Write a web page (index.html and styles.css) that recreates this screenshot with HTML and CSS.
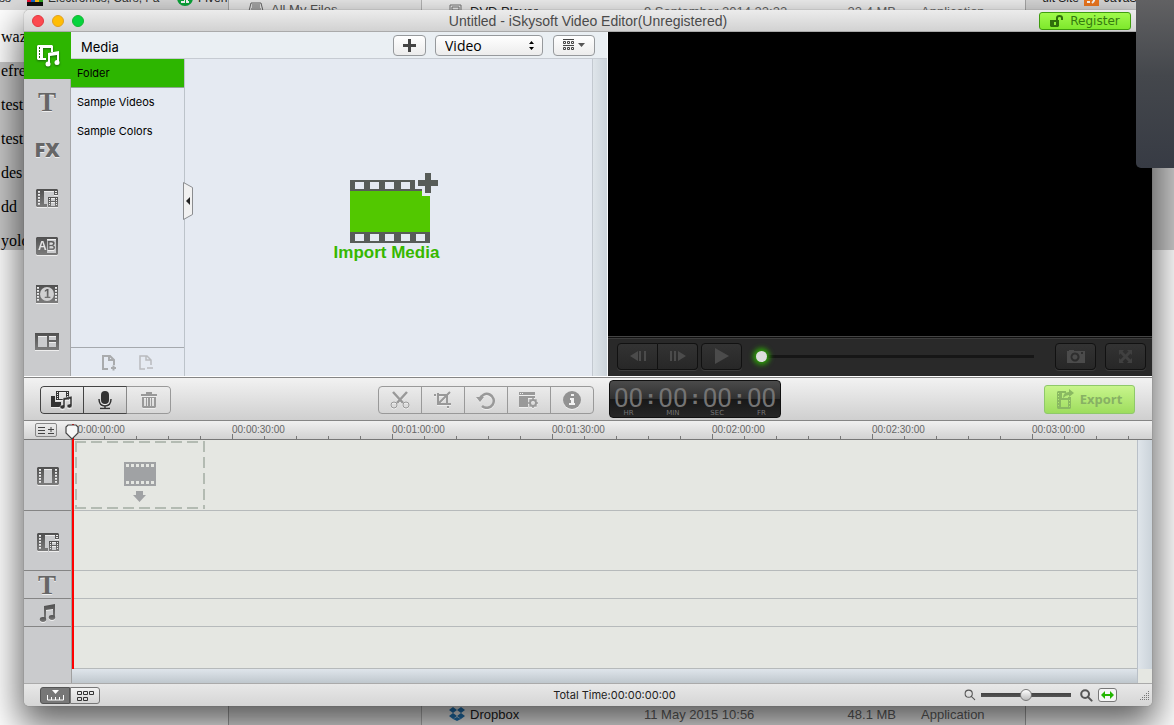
FILE: index.html
```html
<!DOCTYPE html>
<html lang="en">
<head>
<meta charset="utf-8">
<title>Untitled - iSkysoft Video Editor(Unregistered)</title>
<link rel="stylesheet" href="styles.css">
</head>
<body>
<svg class="sprite" aria-hidden="true">
  <defs>
    <linearGradient id="steel" x1="0" y1="0" x2="0" y2="1"><stop offset="0" stop-color="#505050"/><stop offset="1" stop-color="#7c7c7c"/></linearGradient>
    <symbol id="i-pip" viewBox="0 0 24 20">
      <path fill-rule="evenodd" d="M2 1h20l1 1v5h-4V3H9v13h3v3H2l-1-1V2zM3 3v2h2V3zM3 6v2h2V6zM3 9v2h2V9zM3 12v2h2v-2zM3 15v2h2v-2zM20 3v1h2V3zM20 5v1h2V5z"/>
      <path fill-rule="evenodd" d="M13 9h10v10H13zM14 10v1h1v-1zM14 12v1h1v-1zM14 14v1h1v-1zM14 16v1h1v-1zM16 10v3h4v-3zM16 14v4h4v-4zM21 10v1h1v-1zM21 12v1h1v-1zM21 14v1h1v-1zM21 16v1h1v-1z"/>
    </symbol>
    <symbol id="i-note" viewBox="0 0 18 18">
      <path d="M6 2l11-2v13h-2V5L8 6v9H6z"/>
      <ellipse cx="5" cy="15.500" rx="3.200" ry="2.400"/><ellipse cx="14" cy="13.500" rx="3.200" ry="2.400"/>
    </symbol>
    <symbol id="i-film" viewBox="0 0 22 18">
      <path fill-rule="evenodd" d="M1 0h20l1 1v16l-1 1H1l-1-1V1zM7 2v14h8V2zM2 2v2h2V2zM2 5v2h2V5zM2 8v2h2V8zM2 11v2h2v-2zM2 14v2h2v-2zM18 2v2h2V2zM18 5v2h2V5zM18 8v2h2V8zM18 11v2h2v-2zM18 14v2h2v-2z"/>
    </symbol>
    <symbol id="i-mag" viewBox="0 0 14 14">
      <circle cx="5.500" cy="5.500" r="4.200" fill="none" stroke="currentColor" stroke-width="var(--stroke)"/><path d="M8.500 8.500l4 4" stroke="currentColor" stroke-width="var(--stroke)" stroke-linecap="round"/>
    </symbol>
  </defs>
</svg>

<div class="desktop">
  <div class="browser">
    <div class="bookmarks">
      <span class="bookmark lead">ess</span>
      <svg width="16" height="16" viewBox="0 0 16 16"><path fill="#e13" d="M0 0h4v14H0z"/><path fill="#16c" d="M4 0h4v14H4z"/><path fill="#fb1" d="M8 0h4v14H8z"/><path fill="#3a2" d="M12 0h4v14h-4z"/><path fill="#111" d="M0 12h16v4H0z"/></svg>
      <span class="bookmark faded">Electronics, Cars, Fa</span>
      <svg width="16" height="16" viewBox="0 0 16 16"><circle cx="8" cy="8" r="8" fill="#0ba83a"/><path fill="#fff" d="M4 11h3V7H5V5h6v6h1v2H9V7H8v6H4z"/></svg>
      <span class="bookmark">Fiverr</span>
      <span class="bookmark site">uit Site</span>
      <svg width="15" height="16" viewBox="0 0 15 16"><path fill="#f47b20" d="M0 0h15v16H0z"/><path fill="none" stroke="#fff" stroke-width="2" d="M3 12h3M9 5q3 5-1 8"/></svg>
      <span class="bookmark">JavaScript</span>
    </div>
    <div class="notes">
      <p>waz</p><p>efre</p><p>test</p><p>test</p><p>des</p><p>dd</p><p>yolo</p>
    </div>
  </div>

  <div class="finder">
    <div class="finder-side">
      <svg width="16" height="14" viewBox="0 0 16 14" fill="none" stroke="#666"><path d="M3 1h10l2 8v4H1V9zM4 3h8M4 5h8M3 7h10M1 9h14"/></svg>
      <span>All My Files</span>
    </div>
    <div class="finder-list">
      <div class="file"><svg width="13" height="14" viewBox="0 0 13 14" fill="none" stroke="#777"><path d="M1 1h11v12H1zM3 3h7v3H3z"/></svg><span class="name">DVD Player</span><span>9 September 2014 22:22</span><span class="size">23.4 MB</span><span>Application</span></div>
      <div class="file last"><svg width="16" height="14" viewBox="0 0 16 14"><path fill="#2477b8" d="M4 0l4 3-4 3-4-3zM12 0l4 3-4 3-4-3zM4 6l4 3-4 3-4-3zM12 6l4 3-4 3-4-3zM8 10l4 2-4 2-4-2z"/></svg><span class="name">Dropbox</span><span>11 May 2015 10:56</span><span class="size">48.1 MB</span><span>Application</span></div>
    </div>
  </div>

  <main class="app">
    <header class="titlebar">
      <div class="lights"><button class="light red" aria-label="Close"></button><button class="light amber" aria-label="Minimize"></button><button class="light green" aria-label="Zoom"></button></div>
      <h1>Untitled - iSkysoft Video Editor(Unregistered)</h1>
      <div class="title-right">
        <button class="register"><svg width="14" height="14" viewBox="0 0 14 14"><path fill="#2f6e0c" fill-rule="evenodd" d="M0 6h6V4q0-3 3.500-3T13 4v2h-2V4q0-1-1.500-1T8 4v2h1v6l-1 1H1l-1-1zM4 8v3h2V8z"/></svg>Register</button>
      </div>
    </header>

    <section class="upper">
      <div class="library">
        <nav class="tabs">
          <button class="tab active" aria-label="Media"><svg width="24" height="24" viewBox="0 0 24 24" fill="#fff"><path fill-rule="evenodd" d="M2 1h14l1 1v6h-2V4H7v10h3v2H2l-1-1V2zM3 3v2h1V3zM3 6v2h1V6zM3 9v2h1V9zM3 12v2h1v-2z"/><path d="M12 9l11-2v12h-2v-8l-7 1v9h-2z"/><circle cx="12" cy="20" r="2.500"/><circle cx="21" cy="18.500" r="2.500"/></svg></button>
          <button class="tab tee">T</button>
          <button class="tab fx">FX</button>
          <button class="tab" aria-label="Picture in picture"><svg width="24" height="20"><use href="#i-pip"/></svg></button>
          <button class="tab" aria-label="Transitions"><svg width="22" height="18" viewBox="0 0 22 18"><path fill-rule="evenodd" d="M1 0h20l1 1v16l-1 1H1l-1-1V1zM11 2v14h9V2z"/><text class="ab" x="2" y="13" fill="#e4e4e4">A</text><text class="ab" x="11" y="13">B</text></svg></button>
          <button class="tab" aria-label="Intro"><svg width="22" height="18" viewBox="0 0 22 18"><path fill-rule="evenodd" d="M0 0h22v18H0zM1 2v2h2V2zM1 5v2h2V5zM1 8v2h2V8zM1 11v2h2v-2zM1 14v2h2v-2zM19 2v2h2V2zM19 5v2h2V5zM19 8v2h2V8zM19 11v2h2v-2zM19 14v2h2v-2z"/><circle cx="11" cy="9" r="7" fill="#cfcfd0"/><text class="ab" x="8" y="13">1</text></svg></button>
          <button class="tab" aria-label="Split screen"><svg width="24" height="17" viewBox="0 0 24 17"><path fill-rule="evenodd" d="M0 0h24v17H0zM3 3v11h9V3zM14 3v4h7V3zM14 9v5h7V9z"/></svg></button>
        </nav>
        <div class="media">
          <div class="media-head">
            <h2>Media</h2>
            <button class="tool add" aria-label="Add"><svg width="13" height="13" viewBox="0 0 13 13"><path fill="#444" d="M5 0h3v5h5v3H8v5H5V8H0V5h5z"/></svg></button>
            <label class="kind"><select aria-label="Media type"><option>Video</option><option>Audio</option></select><svg width="5" height="9" viewBox="0 0 5 9"><path d="M0 3l2.500-3L5 3zM0 6h5L2.500 9z"/></svg></label>
            <button class="tool view" aria-label="View"><svg width="22" height="12" viewBox="0 0 22 12"><path fill="none" stroke="#444" d="M0 .5h11M.5 2.500h2v2h-2zM4.500 2.500h2v2h-2zM8.500 2.500h2v2h-2zM0 6.500h11M.5 8.500h2v2h-2zM4.500 8.500h2v2h-2zM8.500 8.500h2v2h-2z"/><path fill="#555" d="M15 4h7l-3.500 4z"/></svg></button>
          </div>
          <div class="media-body">
            <div class="folders">
              <button class="folder active">Folder</button><button class="folder">Sample Videos</button><button class="folder">Sample Colors</button>
              <div class="folder-foot">
                <button aria-label="New folder"><svg width="15" height="17" viewBox="0 0 15 17" fill="none" stroke="#a9abad" stroke-width="2"><path d="M7 15H2V2h7l4 4v5M8 2v4h5"/><path d="M10 14h5M12.500 11.500v5"/></svg></button>
                <button aria-label="Remove folder"><svg width="15" height="17" viewBox="0 0 15 17" fill="none" stroke="#b9bbbe" stroke-width="1.500"><path d="M7 15H2V2h7l4 4v5M8 2v4h5M9 14h6"/></svg></button>
              </div>
              <button class="collapse" aria-label="Collapse list"><svg width="10" height="38" viewBox="0 0 10 38"><path fill="#f1f1f1" stroke="#8b8d90" d="M.5 .5l9 5v27l-9 5z"/><path fill="#222" d="M3 19l4-4v8z"/></svg></button>
            </div>
            <div class="bin">
              <button class="import"><svg width="90" height="72" viewBox="0 0 90 72"><path fill="#52c800" d="M1 18h80v43H1z"/><path fill="#575c58" fill-rule="evenodd" d="M1 8h65v9h7v2H1zM6 10v7h9v-7zM21 10v7h9v-7zM36 10v7h9v-7zM52 10v7h9v-7zM1 60h80v11H1zM6 62v7h9v-7zM21 62v7h9v-7zM36 62v7h9v-7zM52 62v7h9v-7zM67 62v7h9v-7z"/><path fill="#e5eaf2" d="M73 17h9v7h-9z"/><path fill="#575c58" d="M76 1h6v7h7v6h-7v7h-6v-7h-7V8h7z"/></svg>Import Media</button>
            </div>
            <div class="vstrip"></div>
          </div>
        </div>
      </div>
      <div class="preview">
        <div class="screen"></div>
        <div class="controls">
          <div class="pair"><button class="dark" aria-label="Previous frame"><svg width="16" height="12" viewBox="0 0 16 12"><path d="M0 6l8-5v10zM9 1h2v10H9zM14 1h2v10h-2z"/></svg></button><button class="dark" aria-label="Next frame"><svg width="16" height="12" viewBox="0 0 16 12"><path d="M16 6L8 1v10zM0 1h2v10H0zM4 1h2v10H4z"/></svg></button></div>
          <button class="dark" aria-label="Play"><svg width="16" height="16" viewBox="0 0 16 16"><path d="M1 0l14 8-14 8z"/></svg></button>
          <input class="seek" type="range" min="0" max="100" value="0" aria-label="Position">
          <button class="dark" aria-label="Snapshot"><svg width="18" height="13" viewBox="0 0 18 13"><path fill-rule="evenodd" d="M0 1h2V0h5v1h11v12H0zM8 2.500a4.500 4.500 0 1 0 .1 0zM8 4.500a2.500 2.500 0 1 1-.1 0zM14 2v2h2V2z"/></svg></button>
          <button class="dark full" aria-label="Full screen"><svg width="13" height="13" viewBox="0 0 13 13"><path d="M0 0h5L3.500 1.500l3 3 3-3L8 0h5v5l-1.500-1.500-3 3 3 3L13 8v5H8l1.500-1.500-3-3-3 3L5 13H0V8l1.500 1.500 3-3-3-3L0 5z"/></svg></button>
        </div>
      </div>
    </section>

    <section class="toolbar">
      <div class="bar-left">
        <div class="group solid">
          <button aria-label="Media library"><svg width="24" height="20" viewBox="0 0 24 20"><path fill="#333" fill-rule="evenodd" d="M1 6h4v6h6v5H1zM6 1h13v9H6zM7 2v1h1V2zM7 4v1h1V4zM7 6v1h1V6zM7 8v1h1V8zM9 2v7h7V2zM17 2v1h1V2zM17 4v1h1V4zM17 6v1h1V6z"/><path fill="#333" stroke="#e8e8e8" stroke-width=".5" d="M13 8l9-2v10a2.500 2 0 1 1-2-2v-5l-5 1v7a2.500 2 0 1 1-2-2z"/></svg></button>
          <button aria-label="Record"><svg width="14" height="20" viewBox="0 0 14 20"><rect x="3" y="1" width="8" height="13" rx="4" fill="#333"/><path fill="none" stroke="#333" stroke-width="1.500" d="M1 9q0 7 6 7t6-7M7 16v3M2 18.500h10"/></svg></button>
          <button class="off" aria-label="Delete"><svg width="16" height="17" viewBox="0 0 16 17"><path fill="#999" fill-rule="evenodd" d="M5 0h6v2h5v2H0V2h5zM1 5h14v10l-1 1H2l-1-1zM3 6v8h2V6zM6 6v8h1V6zM9 6v8h1V6zM11 6v8h2V6z"/></svg></button>
        </div>
        <div class="group">
          <button aria-label="Cut"><svg width="20" height="18" viewBox="0 0 20 18" fill="none" stroke="#999"><circle cx="4" cy="14" r="3"/><circle cx="16" cy="14" r="3"/><path stroke-width="2.500" d="M3 1l10 11M17 1L7 12"/></svg></button>
          <button aria-label="Crop"><svg width="18" height="18" viewBox="0 0 18 18" fill="none" stroke="#999" stroke-width="2"><path d="M4 2v11h13M14 17v-2M2 4H0M4 4h9v9M4 13L16 1"/></svg></button>
          <button aria-label="Rotate"><svg width="20" height="18" viewBox="0 0 20 18"><path fill="none" stroke="#999" stroke-width="2.500" d="M4 8a7 7 0 1 1 2 7"/><path fill="#999" d="M0 6h8l-4 5z"/></svg></button>
          <button aria-label="Settings"><svg width="20" height="18" viewBox="0 0 20 18"><path fill="#999" fill-rule="evenodd" d="M0 1h16v3H0zM1 2v1h1V2zM3 2v1h1V2zM0 5h16v2H9v9H0z"/><circle cx="14" cy="12" r="3" fill="none" stroke="#999" stroke-width="2"/><path stroke="#999" stroke-width="1.500" d="M14 7v2M14 15v2M9 12h2M17 12h2M10.500 8.500l1.500 1.500M16 14l1.500 1.500M17.500 8.500L16 10M12 14l-1.500 1.500"/></svg></button>
          <button aria-label="Info"><svg width="18" height="18" viewBox="0 0 18 18"><circle cx="9" cy="9" r="9" fill="#929292"/><path fill="#f2f2f2" d="M8 3h3v2H8zM7 7h4v5h1v2H6v-2h2V9H7z"/></svg></button>
        </div>
      </div>
      <div class="bar-right">
        <div class="timecode"><div class="unit"><b>00</b><i>HR</i></div><span>:</span><div class="unit"><b>00</b><i>MIN</i></div><span>:</span><div class="unit"><b>00</b><i>SEC</i></div><span>:</span><div class="unit"><b>00</b><i>FR</i></div></div>
        <button class="export"><svg width="17" height="20" viewBox="0 0 17 20" fill="#8ab962"><path fill-rule="evenodd" d="M1 2h8v2H5v5h6v-1h3v11l-1 1H1l-1-1V3zM1 4v1h1V4zM1 7v1h1V7zM1 10v1h1v-1zM1 13v1h1v-1zM1 16v1h1v-1zM4 11v7h7v-7zM12 11v1h1v-1zM12 14v1h1v-1zM12 17v1h1v-1z"/><path d="M6 9q0-6 6-6V0l5 4-5 4V6Q9 6 6 9z"/></svg>Export</button>
      </div>
    </section>

    <section class="timeline">
      <div class="corner"><button aria-label="Track options"><svg width="17" height="9" viewBox="0 0 17 9"><path fill="none" stroke="#444" d="M0 1.500h7M0 4.500h7M0 7.500h7M10 3.500h6M13 1v5M10 7.500h6"/></svg></button></div>
      <div class="ruler">
        <span>00:00:00:00</span><span>00:00:30:00</span><span>00:01:00:00</span><span>00:01:30:00</span><span>00:02:00:00</span><span>00:02:30:00</span><span>00:03:00:00</span>
      </div>
      <div class="heads">
        <div class="head video"><svg width="22" height="18"><use href="#i-film"/></svg></div>
        <div class="head overlay"><svg width="24" height="20"><use href="#i-pip"/></svg></div>
        <div class="head slim tee">T</div>
        <div class="head slim"><svg width="18" height="18"><use href="#i-note"/></svg></div>
        <div class="head rest"></div>
      </div>
      <div class="lanes">
        <div class="lane video"><div class="drop"><svg width="32" height="40" viewBox="0 0 32 40" fill="#a0a2a4"><path fill-rule="evenodd" d="M0 0h32v24H0zM2 2v3h3V2zM7 2v3h3V2zM12 2v3h3V2zM17 2v3h3V2zM22 2v3h3V2zM27 2v3h3V2zM2 19v3h3v-3zM7 19v3h3v-3zM12 19v3h3v-3zM17 19v3h3v-3zM22 19v3h3v-3zM27 19v3h3v-3z"/><path d="M12 29h7v4h3l-6.500 7L9 33h3z"/></svg></div></div>
        <div class="lane overlay"></div><div class="lane slim"></div><div class="lane slim"></div><div class="lane rest"></div>
        <div class="hstrip"></div>
      </div>
      <div class="vstrip"></div>
      <div class="playhead"><svg width="14" height="16" viewBox="0 0 14 16"><path fill="#f7f7f7" stroke="#444" stroke-width="1.200" d="M3 1h8l2 2v6l-6 6-6-6V3z"/></svg></div>
    </section>

    <footer class="status">
      <div class="modes"><button class="on" aria-label="Timeline view"><svg width="17" height="11" viewBox="0 0 17 11"><path fill="#fff" d="M5 0h7L8.500 4z"/><path fill="none" stroke="#fff" d="M.5 5v5h16V5M4.500 7v3M8.500 7v3M12.500 7v3"/></svg></button><button aria-label="Storyboard view"><svg width="17" height="11" viewBox="0 0 17 11"><path fill="none" stroke="#333" d="M.5 1.500h4v3h-4zM6.500 1.500h4v3h-4zM12.500 1.500h4v3h-4zM.5 7.500h4v3h-4zM6.500 7.500h4v3h-4z"/></svg></button></div>
      <output>Total Time:00:00:00:00</output>
      <div class="zoom">
        <svg class="mag thin" width="12" height="12"><use href="#i-mag"/></svg>
        <input class="scale" type="range" min="0" max="100" value="50" aria-label="Timeline zoom">
        <svg class="mag thick" width="13" height="13"><use href="#i-mag"/></svg>
        <button class="fit" aria-label="Fit timeline"><svg width="13" height="8" viewBox="0 0 13 8"><path fill="#22b500" d="M0 4l4-4v3h5V0l4 4-4 4V5H4v3z"/></svg></button>
        <svg class="grip" width="10" height="10" viewBox="0 0 10 10"><path fill="none" stroke="#777" stroke-dasharray="1 1" d="M0 9.500h10M2 7.500h8M4 5.500h6M6 3.500h4M8 1.500h2"/></svg>
      </div>
    </footer>
  </main>
  <div class="shade"></div>
</div>
</body>
</html>
```
FILE: styles.css
```css
* { box-sizing: border-box; }
html, body { height: 100%; margin: 0; }
body { font: 11px/14px Inter, "Liberation Sans", sans-serif; color: #000; overflow: hidden; }
h1, h2, p { margin: 0; font-weight: 400; }
button, select, input { font: inherit; color: inherit; margin: 0; padding: 0; border: 0; background: none; }
button { display: flex; align-items: center; justify-content: center; }
svg { display: block; flex: none; }
.sprite { position: absolute; width: 0; height: 0; }

.desktop { position: relative; height: 100%; overflow: hidden; background: #fff; }
.browser { position: absolute; inset: -14px 0 0; }
.bookmarks { display: flex; align-items: center; height: 24px; gap: 5px; background: #dcdcdc; font: 12px/16px "Liberation Sans", sans-serif; color: #222; overflow: hidden; white-space: nowrap; }
.bookmark.lead { width: 22px; overflow: hidden; direction: rtl; padding-right: 11px; }
.bookmark.faded { width: 124px; color: #333; }
.bookmark.site { margin-left: auto; }
.bookmarks span:last-child { width: 70px; }
.notes { padding-top: 10px; font: 16px/34px "Liberation Serif", serif; background: linear-gradient(#c8c8c8, #c8c8c8) 0 52px / 100% 188px no-repeat; }
.notes p { padding-left: 1px; }

.finder { position: absolute; top: 0; bottom: 0; left: 228px; right: 148px; display: flex; background: #f4f4f4; border: solid #aaa; border-width: 0 1px; font: 13px/16px "Liberation Sans", sans-serif; color: #666; }
.finder-side { width: 193px; padding: 2px 19px; display: flex; gap: 7px; background: #ececec; border-right: 1px solid #b8b8b8; color: #555; }
.finder-list { flex: 1; display: flex; flex-direction: column; justify-content: space-between; padding: 4px 0 2px 27px; }
.file { display: grid; grid-template-columns: 13px 166px 167px 77px 1fr; gap: 8px; white-space: nowrap; }
.file .name { color: #222; }
.file .size { text-align: right; }
.file span:last-child { padding-left: 17px; }

.app { position: absolute; inset: 10px 22px 19px 24px; display: grid; grid-template-rows: 22px 1fr 44px 263px 22px; border-radius: 5px; overflow: hidden; background: #e5e7e2; }
.app { box-shadow: 0 0 1px #555, 0 16px 36px 4px rgba(0, 0, 0, .62); }
.titlebar { display: grid; grid-template-columns: 1fr auto 1fr; align-items: center; padding: 0 8px; background: linear-gradient(#ececec, #d2d2d2); border-bottom: 1px solid #aaa; }
.titlebar h1 { font: 14px/18px "Liberation Sans", sans-serif; color: #4a4a4a; }
.lights { display: flex; gap: 8px; }
.light { width: 12px; height: 12px; border-radius: 50%; }
.red { background: #fc4950; border: 1px solid #e2383f; }
.amber { background: #ffbd04; border: 1px solid #dfa023; }
.green { background: #05d43c; border: 1px solid #17b432; }
.title-right { display: flex; justify-content: flex-end; padding-right: 13px; }
.register { width: 92px; height: 18px; gap: 6px; border: 1px solid #3f9d0e; border-radius: 3px; background: linear-gradient(#a0fa4c, #7ee82c); font: 12px/16px "DejaVu Sans", sans-serif; color: #357a10; }

.upper { display: grid; grid-template-columns: 584fr 544fr; min-height: 0; border-bottom: 1px solid #fff; }
.library { display: grid; grid-template-columns: 47px 1fr; min-width: 0; border-right: 1px solid #f8fafc; }
.tabs { display: grid; grid-template-rows: 47px repeat(6, 48px); background: #cacbcd; border-right: 1px solid #a6a7a9; }
.tab, .head { color: #666; fill: url(#steel); }
.tab { padding-bottom: 3px; }
.tab svg, .head svg { filter: drop-shadow(0 1px 0 #eee); }
.tab.active { background: #2db600; margin-right: -1px; padding: 0; }
.tab.active svg { filter: drop-shadow(0 1px 1px #17600a); }
.tee { font: bold 27px/26px "Liberation Serif", serif; text-shadow: 0 1px #eee; }
.fx { font: 800 20px/24px "Open Sans", sans-serif; text-shadow: 0 1px #eee; }
.ab { font: bold 12px "Liberation Sans", sans-serif; }
.media { display: grid; grid-template-rows: 27px 1fr; min-width: 0; }
.media-head { display: flex; align-items: center; padding: 0 12px 0 10px; background: #eaeff3; border-bottom: 1px solid #c6cbd2; }
.media-head h2 { flex: 1; padding-top: 4px; font: 13px/16px Inter, sans-serif; }
.tool, .kind { height: 21px; border: 1px solid #96999c; border-radius: 4px; background: linear-gradient(#fff, #ececec); }
.add { width: 33px; }
.kind { display: flex; align-items: center; width: 108px; margin: 0 10px 0 9px; padding-right: 8px; }
.kind select { flex: 1; appearance: none; padding-left: 9px; font: 14px/19px "Open Sans", sans-serif; }
.view { width: 42px; }
.media-body { display: grid; grid-template-columns: 114px 1fr 14px; background: #e5eaf2; }
.folders { position: relative; display: flex; flex-direction: column; border-right: 1px solid #bcc3ca; }
.folder { height: 29px; padding: 0 0 1px 6px; justify-content: flex-start; }
.folder.active { background: #2db600; border-bottom: 1px solid #8ea690; }
.folder-foot { display: flex; gap: 22px; height: 29px; margin-top: auto; padding-left: 30px; border-top: 1px solid #a5a9ae; }
.collapse { position: absolute; left: 112px; top: 50%; margin-top: -36px; }
.bin { display: flex; align-items: center; justify-content: center; padding: 0 4px 2px 0; border-right: 1px solid #c3c9d0; }
.import { flex-direction: column; align-items: flex-end; font: bold 17px/18px "Liberation Sans", sans-serif; color: #36b800; }
.vstrip { background: linear-gradient(90deg, #dfe5ea, #cbd3da); }
.preview { display: grid; grid-template-rows: 1fr 40px; background: #000; }
.controls { display: flex; align-items: center; padding: 0 6px 1px 9px; background: #292929; border-top: 1px solid #444; box-shadow: inset 0 1px #111, inset 0 2px #3c3c3c; }
.dark { width: 41px; height: 27px; border: 1px solid #111; border-radius: 4px; background: linear-gradient(#333, #272727); box-shadow: 0 1px #3c3c3c; fill: #4b4b4b; }
.pair { display: flex; margin-right: 3px; }
.pair .dark:first-child { border-radius: 4px 0 0 4px; }
.pair .dark:last-child { width: 40px; border-left: 0; border-radius: 0 4px 4px 0; }
.seek, .scale { appearance: none; min-width: 0; }
.seek { flex: 1; height: 24px; margin: 0 21px 0 14px; background: linear-gradient(#161616, #161616) center / 100% 3px no-repeat; }
.seek::-webkit-slider-thumb { appearance: none; width: 11px; height: 11px; border-radius: 50%; background: #ddd; box-shadow: 0 0 5px 3px #2c9c08; }
.full { margin-left: 9px; fill: #404040; }

.toolbar { display: grid; grid-template-columns: 584fr 544fr; background: linear-gradient(#f2f2f2, #cfcfcf); border: solid #858585; border-width: 1px 0; }
.bar-left, .bar-right { display: flex; align-items: center; justify-content: space-between; }
.bar-left { padding: 2px 14px 0 16px; }
.bar-right { padding: 0 17px 0 1px; }
.group { display: flex; height: 28px; border: 1px solid #999; border-radius: 4px; overflow: hidden; background: linear-gradient(#ebebeb, #d5d5d5); }
.group button { width: 43px; border-right: 1px solid #999; }
.group button:last-child { width: 42px; border-right: 0; }
.group svg { filter: drop-shadow(0 1px 0 #eee); }
.solid { border: 0; }
.solid button { border: 1px solid #444; border-right: 0; background: linear-gradient(#eee, #c6c6c6); }
.solid button:first-child { width: 43px; border-radius: 4px 0 0 4px; }
.solid button:nth-child(2) { width: 44px; border-right: 1px solid #888; }
.solid .off:last-child { width: 44px; border: 1px solid #999; border-left: 0; border-radius: 0 4px 4px 0; background: linear-gradient(#ececec, #d8d8d8); }
.timecode { display: flex; width: 172px; height: 38px; padding: 7px 4px 0; border: 1px solid #111; border-radius: 4px; background: linear-gradient(#4b4b4b, #303030 50%, #181818 51%, #262626); color: #747474; }
.unit { width: 29px; text-align: center; }
.unit b { display: block; font: 400 26px/21px Roboto, sans-serif; }
.unit i { display: block; font: 7px/9px "DejaVu Sans", sans-serif; }
.timecode > span { width: 16px; text-align: center; font: bold 18px/20px "DejaVu Sans", sans-serif; }
.export { width: 91px; height: 29px; gap: 6px; border: 1px solid #8fc96a; border-radius: 3px; background: linear-gradient(#c8f58c, #9edd5e); font: bold 13px/16px "Open Sans", sans-serif; color: #87b164; }

.timeline { position: relative; display: grid; grid-template: 19px 1fr / 48px 1fr 14px; border-bottom: 1px solid #aaa; }
.corner, .ruler { background: linear-gradient(#f0f0f0, #d2d2d2); border-bottom: 1px solid #777; }
.corner { padding: 2px 0 0 11px; }
.corner button { width: 22px; height: 14px; border: 1px solid #888; border-radius: 2px; }
.ruler { grid-column: 2 / 4; display: flex; overflow: hidden; background: repeating-linear-gradient(90deg, #777 0 1px, transparent 1px 160px) 0 13px / 100% 5px no-repeat, repeating-linear-gradient(90deg, #777 0 1px, transparent 1px 32px) 0 15px / 100% 3px no-repeat, linear-gradient(#f0f0f0, #d2d2d2); }
.ruler span { flex: none; width: 160px; font: 10px/17px "Liberation Sans", sans-serif; color: #666; }
.heads { display: flex; flex-direction: column; background: #cacbcd; border-right: 1px solid #a0a0a0; }
.head { display: flex; align-items: center; justify-content: center; padding-top: 2px; border-bottom: 1px solid #858585; }
.lanes { display: flex; flex-direction: column; border-right: 1px solid #b9c0c8; }
.lane { border-bottom: 1px solid #b6babb; }
.video { height: 71px; }
.overlay { height: 60px; }
.slim { height: 28px; }
.head.slim { padding: 0 1px 0 0; }
.rest { flex: 1; }
.head.rest { border: 0; }
.drop { display: flex; align-items: center; justify-content: center; width: 130px; height: 68px; margin: 1px 0 0 3px; padding-top: 14px; background: repeating-linear-gradient(90deg, #b3bbb2 0 11px, transparent 11px 16px) 0 0 / 100% 2px no-repeat, repeating-linear-gradient(90deg, #b3bbb2 0 11px, transparent 11px 16px) 0 100% / 100% 2px no-repeat, repeating-linear-gradient(#b3bbb2 0 11px, transparent 11px 16px) 0 0 / 2px 100% no-repeat, repeating-linear-gradient(#b3bbb2 0 11px, transparent 11px 16px) 100% 0 / 2px 100% no-repeat; }
.hstrip { height: 14px; background: linear-gradient(#dfe5eb, #bfc7cd); }
.timeline .vstrip { margin-bottom: 14px; }
.playhead { position: absolute; left: 41px; top: 3px; bottom: 14px; background: linear-gradient(#f00, #f00) 7px 0 / 2px 100% no-repeat; }

.status { display: grid; grid-template-columns: 1fr auto 1fr; align-items: center; padding: 0 1px 0 16px; background: linear-gradient(#e8e8e8, #d5d5d5); }
.status output { padding-left: 38px; color: #222; }
.modes { display: flex; }
.modes button { width: 30px; height: 17px; border: 1px solid #777; border-radius: 0 3px 3px 0; background: linear-gradient(#f2f2f2, #d5d5d5); }
.modes .on { border-radius: 3px 0 0 3px; background: #777; border-color: #555; }
.zoom { display: flex; align-items: center; justify-content: flex-end; }
.mag { color: #555; }
.thin { --stroke: 1.2; margin-right: 5px; }
.thick { --stroke: 2.2; margin: 0 5px 0 9px; }
.scale { width: 90px; height: 14px; background: linear-gradient(#444, #555) center / 100% 4px no-repeat; }
.scale::-webkit-slider-thumb { appearance: none; width: 12px; height: 12px; border: 1px solid #777; border-radius: 50%; background: linear-gradient(#fff, #bbb); }
.fit { width: 19px; height: 14px; border: 1px solid #777; border-radius: 3px; background: #f5f5f5; }
.grip { align-self: end; margin: 0 1px 2px 23px; }

.shade { position: absolute; top: 0; right: 0; width: 38px; height: 168px; border-radius: 0 0 0 5px; background: linear-gradient(#616163, #44474c 45%, #373b44); }
```
